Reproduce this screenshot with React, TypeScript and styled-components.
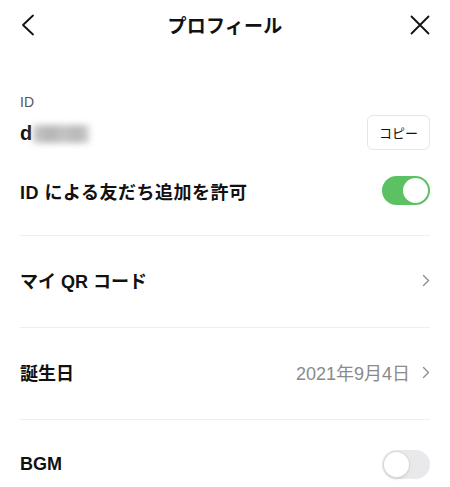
import React from 'react';
import styled, { createGlobalStyle } from 'styled-components';

const GlobalStyle = createGlobalStyle`
  html, body {
    margin: 0;
    padding: 0;
    background: #fff;
  }
  body {
    font-family: 'Liberation Sans', 'Noto Sans CJK JP', sans-serif;
    color: #111;
    -webkit-font-smoothing: antialiased;
  }
`;

const BackIcon: React.FC = () => (
  <svg width="16" height="22" viewBox="0 0 16 22" fill="none">
    <path d="M13 1.5 L3 11 L13 20.5" stroke="#111" strokeWidth="1.8" strokeLinecap="round" strokeLinejoin="round" />
  </svg>
);

const CloseIcon: React.FC = () => (
  <svg width="20" height="20" viewBox="0 0 20 20" fill="none">
    <path d="M1.5 1.5 L18.5 18.5 M18.5 1.5 L1.5 18.5" stroke="#111" strokeWidth="1.8" strokeLinecap="round" />
  </svg>
);

const Chevron: React.FC = () => (
  <svg width="8" height="13" viewBox="0 0 8 13" fill="none">
    <path d="M1.5 1.5 L6.5 6.5 L1.5 11.5" stroke="#8e8e8e" strokeWidth="1.4" strokeLinecap="round" strokeLinejoin="round" />
  </svg>
);

interface SwitchProps {
  on?: boolean;
}

const Switch: React.FC<SwitchProps> = ({ on }) => (
  <Track $on={on}>
    <Thumb $on={on} />
  </Track>
);

const App: React.FC = () => (
  <>
    <GlobalStyle />
    <Page>
      <Header>
        <IconButton>
          <BackIcon />
        </IconButton>
        <Title>プロフィール</Title>
        <IconButton $right>
          <CloseIcon />
        </IconButton>
      </Header>

      <IdSection>
        <Label>ID</Label>
        <IdRow>
          <IdValue>
            d<Blurred />
          </IdValue>
          <CopyButton>コピー</CopyButton>
        </IdRow>
        <ToggleRow>
          <ToggleTitle>ID による友だち追加を許可</ToggleTitle>
          <Switch on />
        </ToggleRow>
      </IdSection>

      <Divider />
      <Row>
        <RowTitle>マイ QR コード</RowTitle>
        <Chevron />
      </Row>

      <Divider />
      <Row>
        <RowTitle>誕生日</RowTitle>
        <RowEnd>
          <RowValue>2021年9月4日</RowValue>
          <Chevron />
        </RowEnd>
      </Row>

      <Divider />
      <Row>
        <RowTitle>BGM</RowTitle>
        <Switch />
      </Row>
    </Page>
  </>
);

export default App;

const Page = styled.div`
  width: 450px;
  height: 487px;
  overflow: hidden;
  background: #fff;
`;

const Header = styled.header`
  height: 48px;
  padding: 0 20px;
  display: flex;
  align-items: center;
  justify-content: space-between;
`;

const IconButton = styled.div<{ $right?: boolean }>`
  width: 28px;
  display: flex;
  justify-content: ${({ $right }) => ($right ? 'flex-end' : 'flex-start')};
  padding-top: 2px;
`;

const Title = styled.h1`
  margin: 0;
  font-size: 19px;
  font-weight: 700;
  letter-spacing: 0.2px;
`;

const IdSection = styled.section`
  padding: 44px 20px 30px;
`;

const Label = styled.div`
  font-size: 14px;
  line-height: 20px;
  color: #555;
`;

const IdRow = styled.div`
  margin-top: 3px;
  display: flex;
  align-items: center;
  justify-content: space-between;
`;

const IdValue = styled.div`
  display: flex;
  align-items: center;
  font-size: 20px;
  font-weight: 700;
  padding-top: 2px;
`;

const Blurred = styled.span`
  display: inline-block;
  width: 56px;
  height: 18px;
  margin-left: 1px;
  background: linear-gradient(90deg, #c9c9c9 0%, #b5b5b5 30%, #c4c4c4 55%, #b8b8b8 80%, #d0d0d0 100%);
  filter: blur(3px);
`;

const CopyButton = styled.button`
  width: 63px;
  height: 35px;
  border: 1px solid #e6e6e6;
  border-radius: 6px;
  background: #fff;
  font-family: 'Liberation Sans', 'Noto Sans CJK JP', sans-serif;
  font-size: 13px;
  color: #111;
  padding: 0;
`;

const ToggleRow = styled.div`
  margin-top: 26px;
  display: flex;
  align-items: center;
  justify-content: space-between;
`;

const Row = styled.div`
  box-sizing: border-box;
  height: 91px;
  padding: 0 20px 3px;
  display: flex;
  align-items: center;
  justify-content: space-between;
`;

const RowTitle = styled.span`
  font-size: 18px;
  font-weight: 700;
  color: #111;
`;

const ToggleTitle = styled(RowTitle)`
  letter-spacing: 0.5px;
`;

const RowEnd = styled.div`
  display: flex;
  align-items: center;
  gap: 12px;
`;

const RowValue = styled.span`
  font-size: 18px;
  color: #8a8a8a;
`;

const Divider = styled.hr`
  margin: 0 20px;
  border: none;
  height: 1px;
  background: #efefef;
`;

const Track = styled.span<{ $on?: boolean }>`
  position: relative;
  width: 48px;
  height: 29px;
  border-radius: 15px;
  background: ${({ $on }) => ($on ? '#5cc163' : '#e9e9eb')};
  flex-shrink: 0;
`;

const Thumb = styled.span<{ $on?: boolean }>`
  position: absolute;
  top: 2px;
  left: ${({ $on }) => ($on ? '21px' : '2px')};
  width: 25px;
  height: 25px;
  border-radius: 50%;
  background: #fff;
  box-shadow: ${({ $on }) => ($on ? 'none' : '0 0 0 1px #d8d8d8, 0 2px 3px rgba(0, 0, 0, 0.12)')};
`;
